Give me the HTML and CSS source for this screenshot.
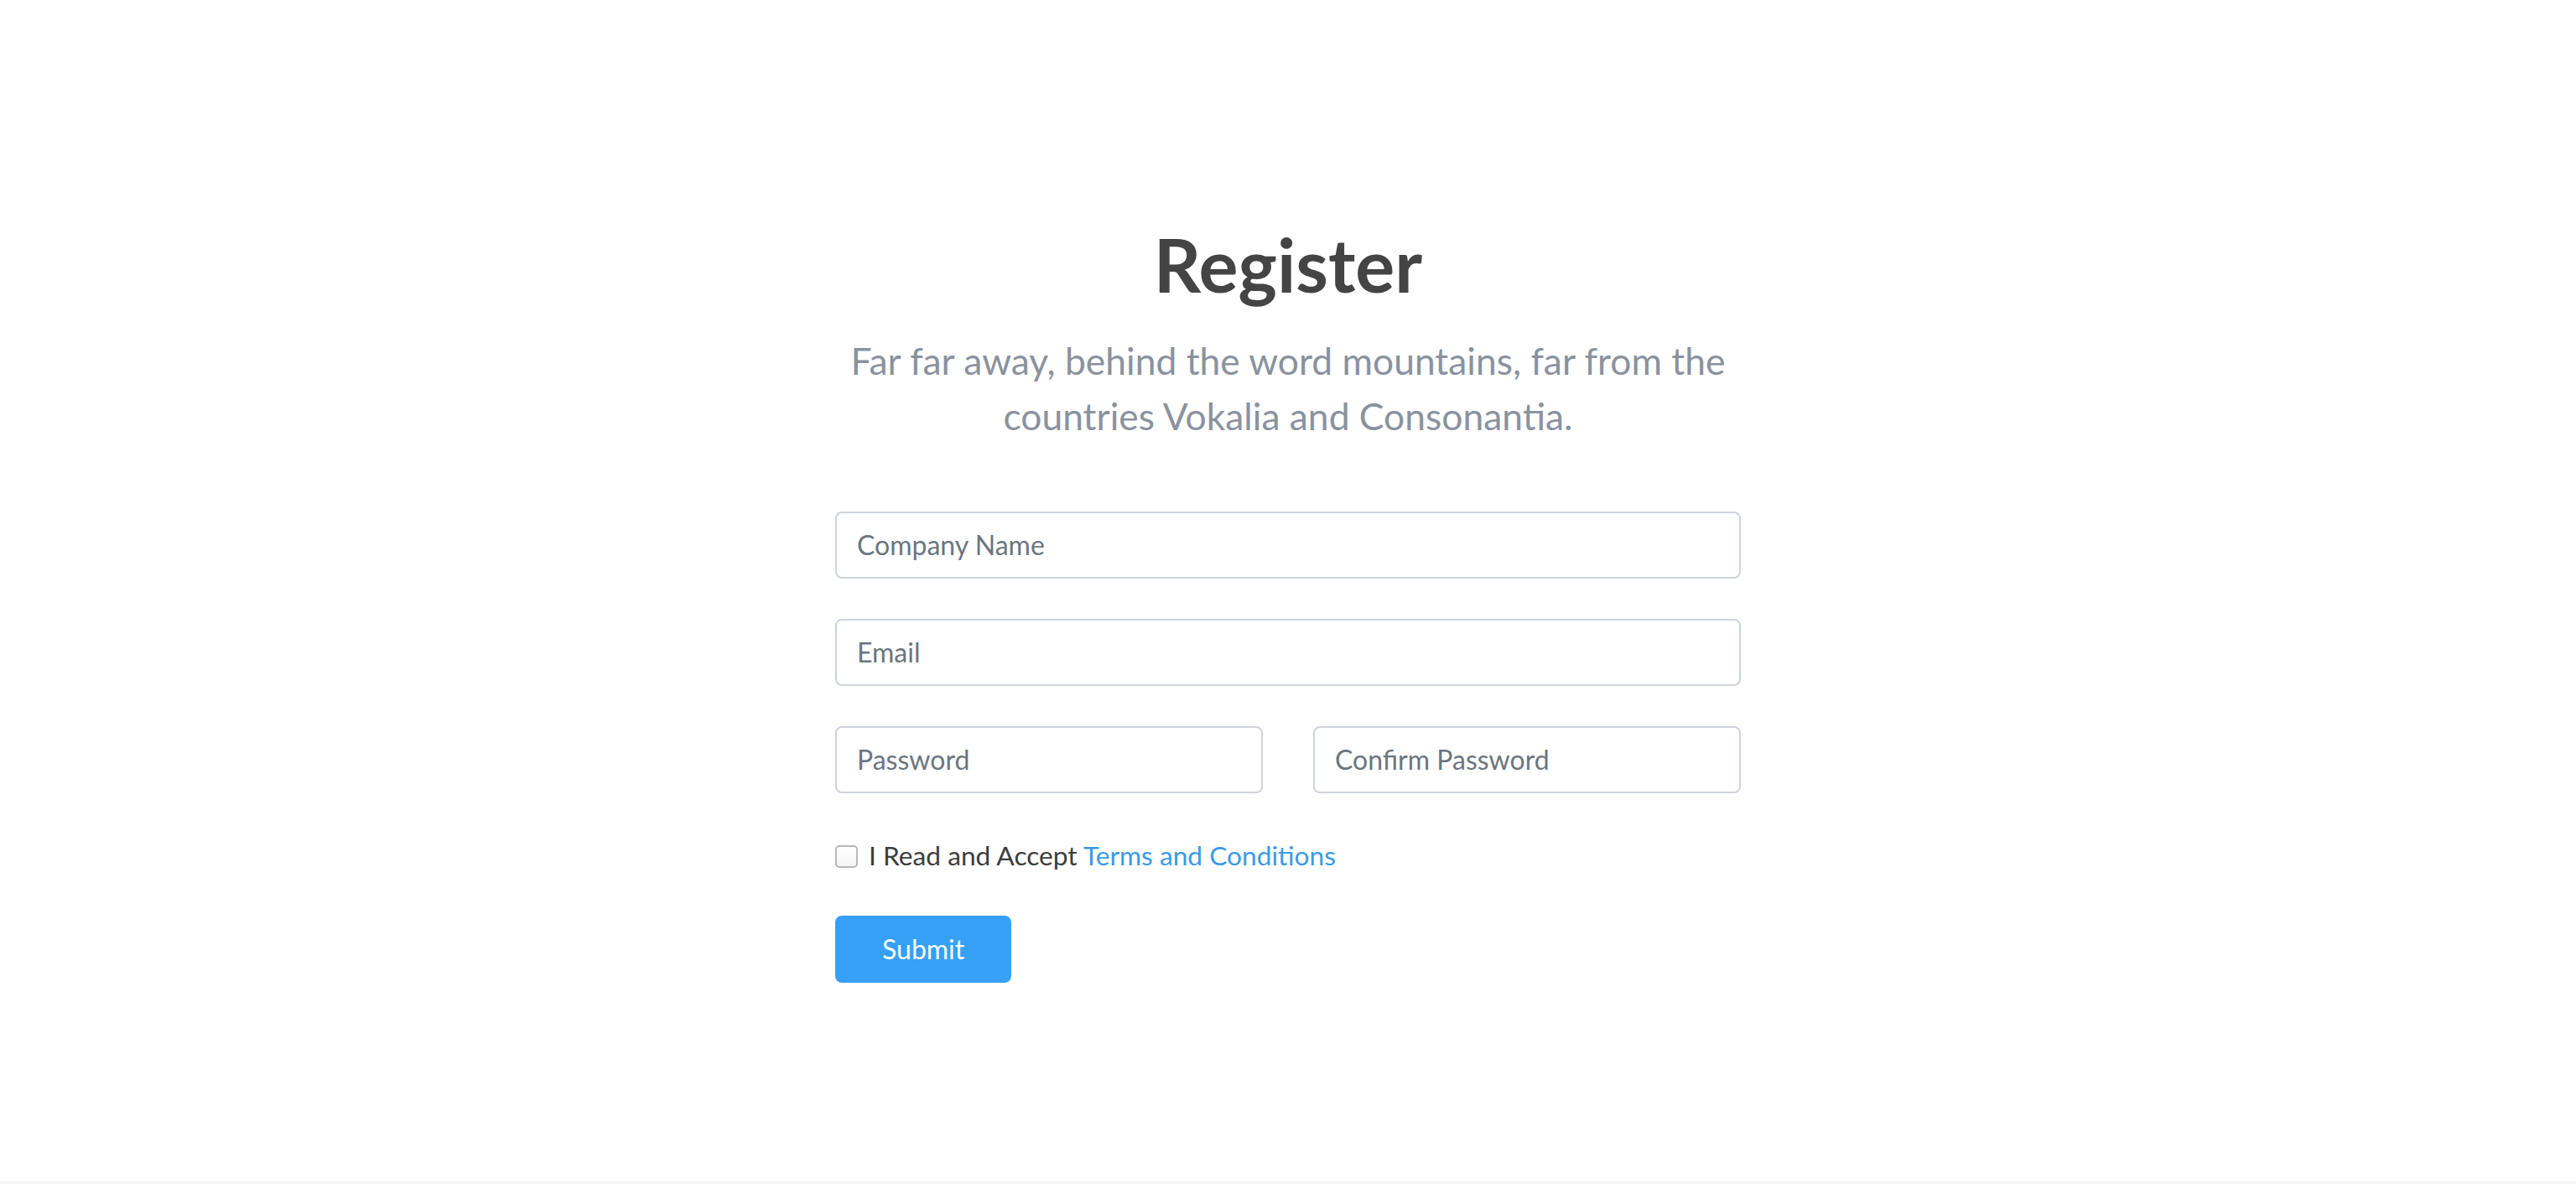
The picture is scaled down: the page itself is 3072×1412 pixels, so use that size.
FILE: index.html
```html
<!DOCTYPE html>
<html lang="en">
<head>
<meta charset="utf-8">
<title>Register</title>
<link rel="stylesheet" href="styles.css">
</head>
<body>
<section class="page">
  <div class="container">
    <h1 class="title">Register</h1>
    <p class="lead">Far far away, behind the word mountains, far from the countries Vokalia and Consonantia.</p>
    <form class="form">
      <input class="field" type="text" placeholder="Company Name">
      <input class="field" type="email" placeholder="Email">
      <div class="row">
        <input class="field" type="password" placeholder="Password">
        <input class="field" type="password" placeholder="Confirm Password">
      </div>
      <label class="check">
        <input class="box" type="checkbox">
        <span>I Read and Accept <a class="link" href="#">Terms and Conditions</a></span>
      </label>
      <button class="btn" type="button">Submit</button>
    </form>
  </div>
</section>
<div class="footer"></div>
</body>
</html>
```
FILE: styles.css
```css
html, body {
  margin: 0;
  padding: 0;
}
body {
  font-family: Lato, "Open Sans", sans-serif;
  background: #f6f6f6;
  color: #3d3d3d;
}
.page {
  background: #fff;
  height: 1409px;
  box-sizing: border-box;
  padding-top: 263px;
}
.container {
  width: 1080px;
  margin: 0 auto;
}
.title {
  margin: 0;
  text-align: center;
  font-size: 88px;
  font-weight: 700;
  line-height: 1.2;
  color: #444444;
}
.lead {
  margin: 28px 0 0;
  text-align: center;
  font-size: 44.4px;
  line-height: 66px;
  color: #8a929e;
  padding: 0 6px;
}
.form {
  margin-top: 81px;
  display: flex;
  flex-direction: column;
}
.field {
  display: block;
  box-sizing: border-box;
  width: 100%;
  height: 80px;
  padding: 0 24px;
  border: 2px solid #ced4da;
  border-radius: 8px;
  font-family: Lato, sans-serif;
  font-size: 32px;
  color: #495057;
  background: #fff;
  margin: 0 0 48px;
  outline: none;
}
.field::placeholder {
  color: #6c757d;
  opacity: 1;
}
.row {
  display: grid;
  grid-template-columns: 1fr 1fr;
  column-gap: 60px;
}
.check {
  display: flex;
  align-items: flex-start;
  font-size: 31.7px;
  line-height: 48px;
  color: #3d3d3d;
  margin-bottom: 48px;
  padding-top: 2px;
}
.box {
  appearance: none;
  -webkit-appearance: none;
  width: 27px;
  height: 27px;
  margin: 12px 13px 0 0;
  border: 2px solid #b8b8b8;
  border-radius: 5px;
  background: linear-gradient(#fff, #f4f4f4);
  box-sizing: border-box;
  flex: none;
}
.link {
  color: #3a9be8;
  text-decoration: none;
}
.btn {
  align-self: flex-start;
  height: 80px;
  padding: 0 56px;
  border: none;
  border-radius: 8px;
  background: #36a0f6;
  color: #fff;
  font-family: Lato, sans-serif;
  font-size: 32px;
  line-height: 48px;
}
.footer {
  height: 3px;
  background: #f6f6f6;
}
```
